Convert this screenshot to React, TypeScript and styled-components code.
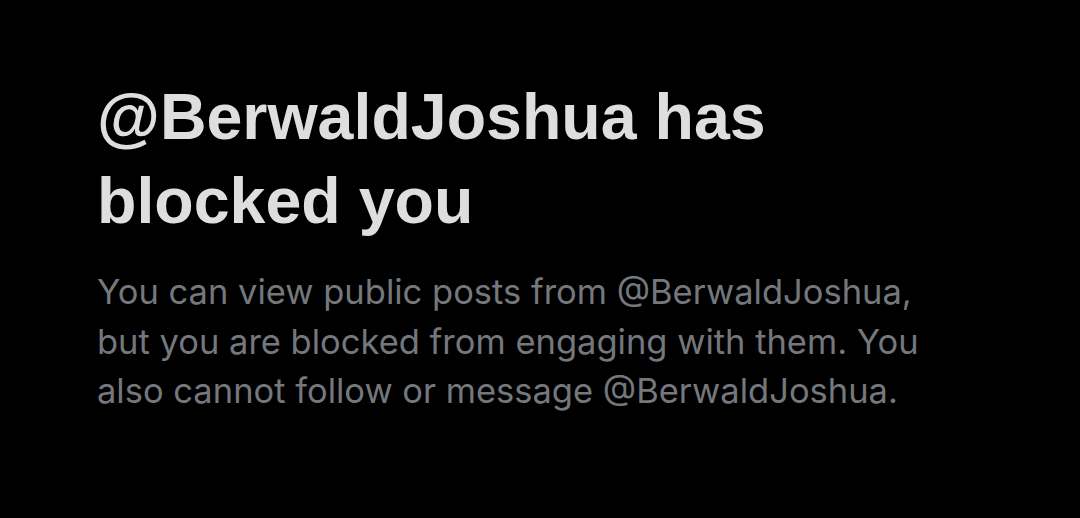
import styled, { createGlobalStyle } from "styled-components";

const GlobalStyle = createGlobalStyle`
  html, body {
    margin: 0;
    padding: 0;
    background: #000;
  }
`;

const Page = styled.main`
  width: 1080px;
  height: 518px;
  box-sizing: border-box;
  padding: 75px 96px 0 97px;
  background: #000;
  overflow: hidden;
`;

const Title = styled.h1`
  margin: 0;
  font-family: "Liberation Sans", Arial, sans-serif;
  font-weight: 700;
  font-size: 64.5px;
  line-height: 84px;
  color: #dedede;
  max-width: 760px;
`;

const Body = styled.p`
  margin: 24px 0 0;
  font-family: Inter, "Noto Sans", sans-serif;
  font-size: 34.5px;
  line-height: 49.5px;
  color: #74787d;
  max-width: 872px;
`;

export default function App() {
  return (
    <>
      <GlobalStyle />
      <Page>
        <Title>@BerwaldJoshua has blocked you</Title>
        <Body>
          You can view public posts from @BerwaldJoshua, but you are blocked from engaging with them. You also cannot
          follow or message @BerwaldJoshua.
        </Body>
      </Page>
    </>
  );
}
